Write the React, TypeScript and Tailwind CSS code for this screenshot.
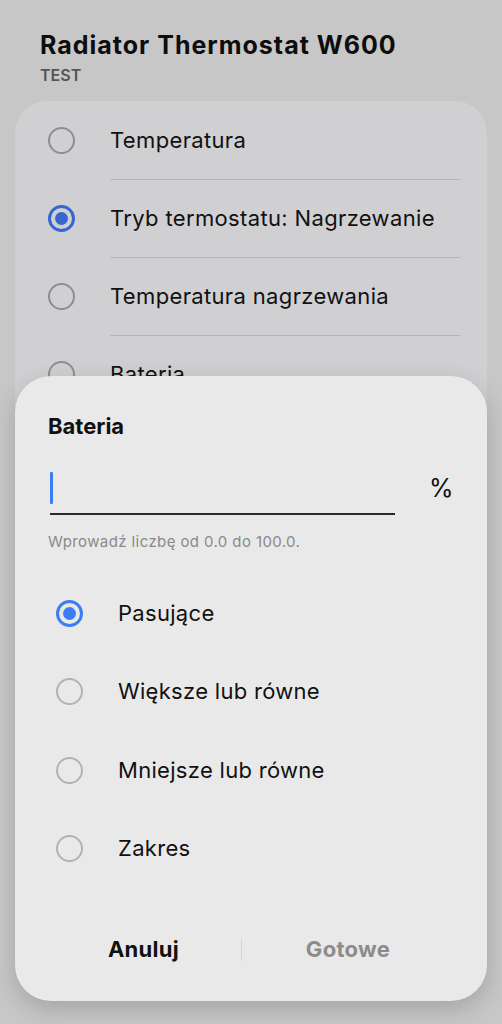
import React from "react";

function Radio({ checked, dim }: { checked?: boolean; dim?: boolean }) {
  if (checked) {
    return (
      <div
        className={`flex h-[27px] w-[27px] shrink-0 items-center justify-center rounded-full border-[3px] ${
          dim ? "border-[#3567d0]" : "border-[#3c7cf4]"
        }`}
      >
        <div className={`h-[13px] w-[13px] rounded-full ${dim ? "bg-[#3567d0]" : "bg-[#3c7cf4]"}`} />
      </div>
    );
  }
  return (
    <div
      className={`h-[27px] w-[27px] shrink-0 rounded-full border-[2px] ${
        dim ? "border-[#8e8e90]" : "border-[#b2b2b2]"
      }`}
    />
  );
}

export default function App() {
  const bgItems = ["Temperatura", "Tryb termostatu: Nagrzewanie", "Temperatura nagrzewania", "Bateria"];
  const options = ["Pasujące", "Większe lub równe", "Mniejsze lub równe", "Zakres"];
  return (
    <div
      className="relative h-[1024px] w-[502px] overflow-hidden bg-[#c7c7c7] text-black"
      style={{ fontFamily: "Inter, Roboto, sans-serif" }}
    >
      <div className="px-[40px] pt-[28px]">
        <div className="text-[25px] font-bold leading-[34px] tracking-[1px] text-[#0d0d0d]">
          Radiator Thermostat W600
        </div>
        <div className="mt-[4px] text-[16px] font-semibold leading-[18px] text-[#555]">TEST</div>
      </div>

      <div className="mx-[15px] mt-[17px] rounded-[32px] bg-[#d0d0d2] pt-[1px]">
        {bgItems.map((t, i) => (
          <div key={t}>
            <div className="flex h-[77px] items-center pl-[33px]">
              <Radio checked={i === 1} dim />
              <span className="ml-[35px] text-[22px] tracking-[0.35px] text-[#111]">{t}</span>
            </div>
            {i < 3 && <div className="ml-[95px] mr-[27px] h-[1px] bg-[#b5b5b7]" />}
          </div>
        ))}
        <div className="h-[60px]" />
      </div>

      <div className="absolute left-[15px] top-[376px] h-[625px] w-[472px] rounded-[36px] bg-[#e9e9e9] shadow-[0_8px_24px_rgba(0,0,0,0.18)]">
        <div className="flex h-full flex-col">
          <div className="pl-[33px] pt-[35px] text-[22px] font-bold leading-[30px] text-[#111]">Bateria</div>
          <div className="mt-[29px] flex items-end pl-[35px]">
            <div className="flex h-[45px] w-[345px] items-start border-b-[2.5px] border-[#2a2a2a] pt-[2px]">
              <div className="h-[32px] w-[3px] rounded-[1px] bg-[#3c7cf4]" />
            </div>
            <div className="mb-[12px] ml-[34px] text-[25px] leading-[30px] text-[#111]">%</div>
          </div>
          <div className="mt-[17px] pl-[33px] text-[15px] leading-[20px] tracking-[0.4px] text-[#8a8a8a]">
            Wprowadź liczbę od 0.0 do 100.0.
          </div>
          <div className="mt-[22px] flex flex-col">
            {options.map((t, i) => (
              <div key={t} className="flex h-[78.5px] items-center pl-[41px]">
                <Radio checked={i === 0} />
                <span className="ml-[35px] text-[22px] tracking-[0.3px] text-[#111]">{t}</span>
              </div>
            ))}
          </div>
          <div className="mt-auto mb-[35px] flex items-center">
            <div className="w-[226px] pl-[31px] text-center text-[22px] font-bold tracking-[0.3px] text-[#111]">
              Anuluj
            </div>
            <div className="h-[22px] w-[1px] bg-[#d4d4d4]" />
            <div className="flex-1 pr-[33px] text-center text-[22px] font-bold tracking-[0.3px] text-[#8c8c8c]">
              Gotowe
            </div>
          </div>
        </div>
      </div>
    </div>
  );
}
